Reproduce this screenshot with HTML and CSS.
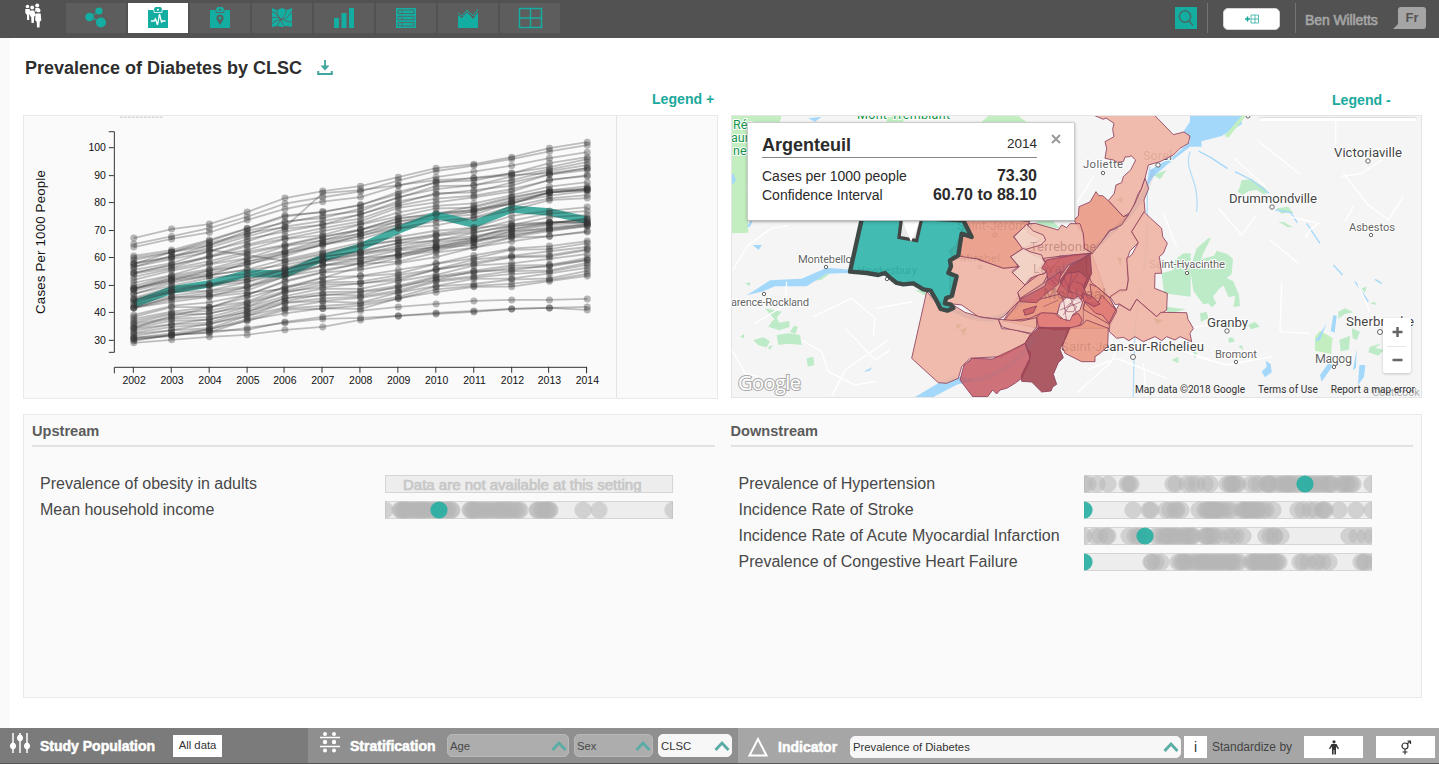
FILE: index.html
```html
<!DOCTYPE html>
<html lang="en">
<head>
<meta charset="utf-8">
<title>Prevalence of Diabetes by CLSC</title>
<link rel="stylesheet" href="styles.css">
</head>
<body>
<header class="topbar">
  <svg class="logo" width="18" height="25" viewBox="0 0 18 25" fill="#fff"><circle cx="2.500" cy="3.500" r="1.800"/><circle cx="7.200" cy="4.500" r="1.900"/><circle cx="12.200" cy="2.500" r="2"/><circle cx="13.500" cy="7.500" r="2"/><path d="M.3 6h4.500l.6 5-1.200 1v5H2v-5L.3 10zM5.300 7.500h4l1.200 5-1.300 1-.4 6.500H6.500L6.200 14 5 13zM10.300 5h4v2l-4 2zM10.500 10.500h5.200l.6 7-1.500 1-.3 6h-2.400l-.5-6-1.400-1z"/></svg>
  <nav class="tabs">
    <a class="tab"><svg viewBox="0 0 22 22"><path d="M5 10L14 4M5 10l11 5" stroke="currentColor"/><circle cx="4.500" cy="10" r="4.300"/><circle cx="14" cy="4" r="3.600"/><circle cx="16" cy="15.500" r="5"/></svg></a>
    <a class="tab active"><svg viewBox="0 0 22 22"><path d="M1 3h6c0-5 8-5 8 0h6v18H1z"/><path d="M7 3v2.500h8V3" fill="none" stroke="#fff" stroke-width=".8"/><circle cx="11" cy="2.700" r="1" fill="#fff"/><path d="M4 14h3l1.500-2 2 6 2-11 2 8 1-1h3" fill="none" stroke="#fff" stroke-width="1.300"/></svg></a>
    <a class="tab"><svg viewBox="0 0 22 22"><path d="M1 3h6c0-5 8-5 8 0h6v18H1z"/><path d="M7 3v2.500h8V3" fill="none" stroke="#5d5d5d" stroke-width=".8"/><circle cx="11" cy="2.700" r="1" fill="#5d5d5d"/><path fill="#5d5d5d" fill-rule="evenodd" d="M11 18C9 14 7.500 13 7.500 11a3.500 3.500 0 0 1 7 0c0 2-1.500 3-3.500 7zM11 9.500a1.500 1.500 0 1 0 0 3 1.500 1.500 0 0 0 0-3z"/></svg></a>
    <a class="tab"><svg viewBox="0 0 22 22"><path d="M1 1l5 2 5-2 5 2 5-2v19l-5-1-5 1-5-1-5 1z"/><path d="M1 5c6 0 8 9 13 15M1 17c5-7 13 0 20-13M6 3v4l4 6M15 3c0 7-7 10-9 16M1 11c7-3 11 4 20 4" fill="none" stroke="#5d5d5d" stroke-width=".8"/></svg></a>
    <a class="tab"><svg viewBox="0 0 22 22"><path d="M1 11h5v10H1zM8.500 6h5v15h-5zM16 1h5v20h-5z"/></svg></a>
    <a class="tab"><svg viewBox="0 0 22 22"><path d="M1 1h20v20H1z"/><path d="M3 3h16v3.500H3zM3 9.300h16v3.500H3zM3 15.500h16V19H3zM7 3v3.500M7 9.300v3.500M7 15.500V19" fill="none" stroke="#5d5d5d" stroke-width=".8"/></svg></a>
    <a class="tab"><svg viewBox="0 0 22 22"><path d="M1 8l4 3 5-6 6 7 5-7v16H1z"/><path d="M1 6l4 3 5-6 6 6 5-7" fill="none" stroke="currentColor"/></svg></a>
    <a class="tab"><svg class="wide" viewBox="0 0 25 22"><path d="M1.500 1.500h22v19h-22zM12.500 1.500v19M1.500 11h22" fill="none" stroke="currentColor" stroke-width="1.500"/></svg></a>
  </nav>
  <div class="tools">
    <span class="search"><svg width="22" height="22" viewBox="0 0 22 22" fill="none" stroke="#456b67" stroke-width="1.500"><circle cx="10" cy="9.500" r="5.700"/><path d="M14 14l4 4.500"/></svg></span>
    <span class="sep"></span>
    <span class="add"><svg width="16" height="10" viewBox="0 0 16 10" fill="none" stroke="#16a597"><path d="M1 5h5M3.500 2.500v5" stroke-width="1.500"/><path d="M7 1h7.500v8H7zM7 5h7.500M11 1v8" stroke-width=".7"/></svg></span>
    <span class="sep second"></span>
    <span class="user">Ben Willetts</span>
    <span class="lang"><svg width="34" height="23" viewBox="0 0 34 23"><path d="M8 0h22a3 3 0 0 1 3 3v16a3 3 0 0 1-3 3H0l5-5V3a3 3 0 0 1 3-3z" fill="#a5a5a5"/></svg><b>Fr</b></span>
  </div>
</header>

<main class="page">
  <div class="titlebar"><h1>Prevalence of Diabetes by CLSC</h1>
    <svg width="16" height="16" viewBox="0 0 16 16" fill="none" stroke="#3fa79d"><path d="M8 0v7" stroke-width="1.800"/><path d="M3.500 5.500h9L8 10.500z" fill="#3fa79d" stroke="none"/><path d="M1.200 11V14h13.600v-3" stroke-width="2"/></svg>
  </div>
  <div class="legends"><span>Legend +</span><span class="minus">Legend -</span></div>

  <div class="charts">
    <section class="trend"><svg id="trend" width="593" height="282" viewBox="24 116 593 282"></svg></section>
    <section class="map">
      <svg class="mapart" width="690" height="281" viewBox="732 116 690 281">
        <g transform="translate(730 110) scale(.33333)">
          <path class="green" d="M0 18h155l-25 80-80 120 5 150-55 2zM470 18h50v25h-50z"/>
          <path class="green2" d="M115 650l10-15 15-12 8 15 30-5 0 18-30 10zM140 675l35-5 35 5 5 30-40-4-30 4zM70 690l30-8 20 12-10 18-25-6zM180 665l12-18 12 3-8 22zM115 710l15-5-12 16zM230 745l20-5 3 25-20 5zM105 595l50 10-20 25zM45 520l15-3v12zM30 680l12-8v13zM165 510l80-5 60-18-30 22-90 13zM555 540l40 3-8 14z"/>
          <path class="water" d="M290 473l-75 33-95 5-70 45 50-12 35-15 95 0 60-38 70-2 85 0 20 8-3-10zM68 405l28 0-10 15zM50 350l25-35-15 35zM400 785l28-14-10 12zM30 30l15 10 5 20-16-18zM235 25l40-5-20 15zM0 200l10-10 8 20-10 15z"/>
          <path class="water" d="M555 861l90-53 45-8 45 10-55 14-70 37z"/>
          <path class="road" d="M5 485l50-80 70-50 50-8M75 640l90-55 5-70M215 690l60 35 20 60 80 40 60-10M250 620l115-55 70 60-5 55M345 655l90 95 45-30M435 595l115-20M305 860l40-80 130-90M0 710l45 80 40 10"/>
        </g>
        <g transform="translate(960 110) scale(.33333)">
          <path class="green" d="M85 18h90l30 22H60z"/>
          <path class="green2" d="M225 330h50l25 25-60-5zM580 195l40-15-20 28zM605 490l35-10 5-30 25-20 22 0v130l-80-10zM618 590l60 8-55 15zM635 750l20-10v20zM700 720l12 10-8 15z"/>
          <path class="water" d="M720 18l-20 2-30 45 25 25-50 45-75 45-15 60 25-40 40-35 70-55 35 0z"/>
          <path class="river" d="M570 170c-20 100 5 170-20 320M548 520c-20 60-25 120-28 340M690 125c-20 60 30 80 20 180M-60 820L0 790"/>
          <path class="road" d="M400 200l-50 80M650 410l-40-100M480 700l-30 60-100 90M380 780l90-35 150 60M550 760l10 100M600 700l150 50"/>
        </g>
        <g transform="translate(1190 110) scale(.33333)">
          <path class="water" d="M0 18h155v25l-60 35-95 25z"/>
          <path class="green" d="M155 18h12l-52 65-12-5zM375 680l15-18 38 22-5 48-48-10z"/>
          <path class="green2" d="M150 230l5-20 30-2 40 27 10 15-15 2-20-12-22 3-20 12-15-10zM260 295l35-5 15 20-20-3-15 5zM265 335l18 2 25 15-15-1zM0 475l20-60 12-10 20-18 12-5-25 50-5 15 38-10 8-15 32 10 17 15-4 45-15 12 20 10 17 40 3 33-20 5 6-35-20 5-15-35-12 8-20 25 10 20-14 12-10-12-15 3-30-40zM445 605l20-10 25 12-25 5-20 15zM448 690l20-8 12-5-3 42-25 5zM485 655l25 10-10 25-12-5zM515 535l15-5-5 18zM540 710l35-10-20 14 28 5-18 18-30-10zM540 580l15-5 3 10zM175 645l20-10 15 15-28 8zM30 610l20-5 5 20-22 10zM110 645l18-5-5 18zM115 685l12-3 8 12-18 5zM145 710l10-5 6 15z"/>
          <path class="water" d="M395 815l-5-20 25-35 15 5zM215 785l15-15-3-18 15 10 3 25-20 15zM430 615l10 3-6 50-12-5zM500 715l-2 58-9 8zM508 765h18l-4 35-18 25zM375 695l35-55-20 50z"/>
          <path d="M25 123l38 20 50 33M135 185l50 25 52 40M257 300l45 8 20 30M350 340l40 60M430 465l28 30M495 515l40 60M555 508l20 12" fill="none" stroke="#a4d8fb" stroke-width="4"/>
          <path class="road" d="M205 93l125 100M437 18v85M460 190l75 95 60 45 45-70M132 145l95 85M85 295l70 80 45-60M240 390l85 70M275 515l-5 150 90 5M505 525l35 80M0 655l100-20M20 740l90 25 135-25M575 150l-60 40-60 10M465 335l25-45M345 385l15-25 25-20-85-20"/>
        </g>
        <g class="towns">
          <text class="park" x="733" y="129">Rés</text><text class="park" x="731" y="142">aun</text><text class="park" x="733" y="155">ne</text>
          <text class="park" x="857" y="119" textLength="93">Mont-Tremblant</text>
          <text x="798" y="263" textLength="54">Montebello</text><text x="857" y="274" textLength="60">Hawkesbury</text><text x="731" y="306" textLength="78">arence-Rockland</text>
          <text x="1083" y="168" textLength="40">Joliette</text><text class="mid" x="1143" y="160" textLength="29">Sorel</text>
          <text class="mid" x="957" y="230" textLength="76">Saint-Jérôme</text><text class="mid" x="1030" y="251" textLength="66">Terrebonne</text><text x="960" y="262" textLength="40">Mirabel</text><text class="mid" x="1033" y="273" textLength="32">Laval</text><text class="big" x="1043" y="299" textLength="63">Montreal</text>
          <text x="1149" y="268" textLength="76">Saint-Hyacinthe</text><text class="city" x="1061" y="351" textLength="143">Saint-Jean-sur-Richelieu</text>
          <text class="city" x="1334" y="157" textLength="68">Victoriaville</text><text class="city" x="1229" y="203" textLength="88">Drummondville</text><text x="1349" y="231" textLength="46">Asbestos</text><text class="city" x="1207" y="327" textLength="41">Granby</text><text x="1215" y="358" textLength="42">Bromont</text><text class="city" x="1346" y="326" textLength="68">Sherbrooke</text><text class="mid" x="1315" y="363" textLength="37">Magog</text><text x="1372" y="396" opacity=".5" textLength="48">Coaticook</text>
        </g>
        <g fill="#fff" stroke="#666"><circle cx="826" cy="267" r="1.700"/><circle cx="764" cy="294" r="1.700"/><circle cx="887" cy="279" r="1.700"/><circle cx="1103" cy="173" r="1.700"/><circle cx="1187" cy="273" r="1.700"/><circle cx="1133" cy="357" r="2.500"/><circle cx="1368" cy="161" r="2.200"/><circle cx="1272" cy="207" r="2.200"/><circle cx="1371" cy="235" r="1.700"/><circle cx="1227" cy="331" r="2.200"/><circle cx="1236" cy="362" r="1.700"/><circle cx="1380" cy="332" r="2.500"/><circle cx="1334" cy="367" r="1.700"/><circle cx="1248" cy="116" r="2"/><circle cx="995" cy="235" r="2"/><circle cx="1049" cy="279" r="2"/><circle cx="980" cy="267" r="1.700"/><circle cx="1158" cy="165" r="2.200"/></g>
        <g class="regions" transform="translate(960 110) scale(.33333)">
          <path class="r3" d="M130 632L180 550 255 450 395 430 440 555 470 600 448 655 235 655z"/>
          <path class="r2" d="M400 15L430 28 438 24 462 40 458 58 462 80 435 95 440 115 435 145 460 150 472 157 490 155 495 141 510 140 512 136 527 150 512 180 490 200 485 218 468 225 463 250 445 272 490 320 510 308 522 285 535 250 545 235 555 205 565 165 600 155 640 135 660 115 685 100 690 78 672 66 640 74 583 15z"/>
          <path class="r2" d="M555 205L566 235 552 270 555 305 535 335 515 365 535 398 510 423 502 445 505 510 500 540 470 550 450 563 395 518 380 483 380 430 425 395 450 362 470 355 505 315 525 280 545 235z"/>
          <path class="r3" d="M408 245l8 12 12 0 17 15 45 48 15-5-20 30-38 17-22 33-28 35-25-15-4-45-14-20-12-20 13-12 2-28 33-14z"/>
          <path class="r2" d="M552 305l20 20 33 30 3 25 14 20-12 30-12 10 7 50-20 0-1 45 38 15-2 50-30 20-60-52-20 34-32-20-12 2-16-24 30-20 20 0 5-30-5-65 15-10 20-37-20-33z"/>
          <path class="r2" d="M530 568l60 52 12-13 78 1 4 20 16 27-10 15 5 25-35-15-15 10-25-10-15 12-20-12-35 15-25-15-18 12-17-10-20 3-22-20 0-30 30-52 32 19z"/>
          <path class="r3" d="M18 330h147l45 5-10 10-40 35 30 35-38 25 23 30-25 5-20 0-55-20-25-10-70 2-12-25 20-15z"/>
          <path class="r2" d="M205 342L225 340 295 360 305 345 320 353 330 341 360 341 370 371 374 416 397 430 300 438 255 450 210 430 190 415 243 388 203 368z"/>
          <path class="r1" d="M162 380l38-37 20 20 30 12 7 15-14 15-53 15z"/>
          <path class="r2" d="M195 525L235 495 255 490 260 460 250 445 310 438 270 480 250 520 180 565 173 547z"/>
          <path class="r1" d="M152 440l38-25 20 10 35 10 5 15 15 20-10 20-20 5-25 10-15 20-15-15-25-20 23-20z"/>
          <path class="r2" d="M-65 582l35-25 0-110 20-10 60 10 80 28 45-5-20 15 40 40-22 22 7 23-50 50-15 8-60-8-50-35-45-5z"/>
          <path class="r2" d="M-100 545l35 37 45 3 35 22 50 15 50 6 10 28 35 2 53 15-18 27-70 40-65 3-30 2-25 25-10 35-35 15-25-2-80-73z"/>
          <path class="r3" d="M180 570l50 0 70-18 10 20-20 40-48-2-32 15-80 10 35-43z"/>
          <path class="r2" d="M115 628l70 5 45-10 0 27-15 20-65-12-25-8z"/>
          <path class="r4" d="M260 450l80-15 55-5-35 20-35 15-25 35-20 28-15-8-5-35-15-10z"/>
          <path class="r4" d="M180 568l75-40 5-15 45-30-10 40-40 30-25 25-50-3zM190 600l40-12-10 20-25 8z"/>
          <path class="r5" d="M390 430l5 60-15 35-10 20-65-18-5-15 32-47 30-15z"/>
          <path class="r4" d="M320 490l40-5 22 20-12 25 8 20-20 25-50-15-18-15z"/>
          <path class="r4 soft" d="M230 620l15-12 40 2 15 15 25-5 30-10 12 20-12 25-70 5-50-10z"/>
          <path class="r3" d="M390 522l20 8 40 35 20 40-22 38-78-45 5-23 20-15z"/>
          <path class="r4 soft" d="M425 555l42 45-20 40-20-25-20-5-35-35 40 8z"/>
          <path class="r4" d="M368 550l30 10 22 22-18 8-32-18z"/>
          <path class="r0" d="M300 580l20-18 22 6 12-10 14 18-8 24-20 12-10 20-20-4-18-16z"/>
          <path class="lines" d="M310 565l10 70M330 560l20 50M300 600l65-25M320 590l10-10 20 10-10 15-20 0-8-12M340 570l-30 45M280 500l40 40 50 20M310 500l25 50M335 490l-10 60M355 490l-35 50M345 515l25 10M250 520l20-15 20 22M250 590l45-20M370 580l0 60-45 20"/>
          <path class="r3" d="M325 655l40-10 15-15 65 25-2 55-23 20-15 10 0 15-40 0-50-25-8-20z"/>
          <path class="r4" d="M12 765l25-20 60 2 60-28 38-19 17 30-5 30-22 45-20 15-25 15-20 5-10 12-12-12-15 20-45 0-38-50z"/>
          <path class="r5" d="M195 700l15-25 25-22 95 0-10 25-20 40 10 25-15 15-15 35 5 15 5 15-12 8-5 12-28 3-20-20-10-10-30-2 0-20 25-50z"/>
          <path class="river dim" d="M-90 560c100 60 150 80 210 60s150-140 270-190c70-80 150-110 190-250M0 805c60 20 170-30 220-120"/>
          <path class="green dim2" d="M0 660l20-8-8 25zM470 440l15 5-3 22zM580 625l30 5-18 12zM-10 640l15 5-15 15zM470 270l15-10 5 20z"/>
        </g>
        <g class="veiled"><text class="big" x="1043" y="299" textLength="63">Montreal</text><text x="1030" y="251" textLength="66">Terrebonne</text><text x="1033" y="273" textLength="32">Laval</text></g>
        <g transform="translate(730 110) scale(.33333)">
          <path d="M398 315l-38 170 50 4 35 6 20-6 20 18 15 12 20 4 30-3 30 18 22 4 15 25 15 30 20 5 18-8-7-10-18-4 3-15 18-8 14-58-25-10 8-20-3-18 25-15 10-65 30 10-25-50z" fill="#29b3a9" fill-opacity=".88" stroke="#3f4947" stroke-width="13" stroke-linejoin="round"/>
          <path d="M515 320l-8 62 53 10 14-62z" fill="#e9ebea" stroke="#444" stroke-width="10"/><path d="M513 320l30 76 31-76z" fill="#fff"/>
        </g>
        <text class="google" x="738" y="390" textLength="63">Google</text>
      </svg>
      <div class="popup">
        <div class="pophead"><b>Argenteuil</b><span>2014</span></div>
        <div class="poprow"><span>Cases per 1000 people</span><b>73.30</b></div>
        <div class="poprow"><span>Confidence Interval</span><b>60.70 to 88.10</b></div>
        <svg class="close" width="10" height="10" viewBox="0 0 10 10"><path d="M1 1l8 8M9 1L1 9" stroke="#999" stroke-width="2"/></svg>
      </div>
      <div class="scrap"></div>
      <div class="zoomer"><svg width="28" height="56" viewBox="0 0 28 56"><path d="M9.500 14h10M14.500 9v10M9.500 42h10" stroke="#666" stroke-width="2.500"/><path d="M4 28.500h19" stroke="#e6e6e6"/></svg></div>
      <div class="credits"><span>Map data ©2018 Google</span><span>Terms of Use</span><span>Report a map error</span></div>
    </section>
  </div>

  <section class="streams">
    <div class="stream"><h2>Upstream</h2>
      <div class="row"><span>Prevalence of obesity in adults</span><div class="strip none">Data are not available at this setting</div></div>
      <div class="row"><span>Mean household income</span><svg class="strip" data-row="income"></svg></div>
    </div>
    <div class="stream"><h2>Downstream</h2>
      <div class="row"><span>Prevalence of Hypertension</span><svg class="strip" data-row="hypertension"></svg></div>
      <div class="row"><span>Incidence Rate of Stroke</span><svg class="strip" data-row="stroke"></svg></div>
      <div class="row"><span>Incidence Rate of Acute Myocardial Infarction</span><svg class="strip" data-row="infarction"></svg></div>
      <div class="row"><span>Prevalence of Congestive Heart Failure</span><svg class="strip" data-row="failure"></svg></div>
    </div>
  </section>
</main>

<footer class="bottombar">
  <div class="seg population">
    <svg width="20" height="22" viewBox="0 0 20 22" fill="#fff" stroke="#fff"><path d="M3 1v20M10 1v20M17 1v20" stroke-width="1.500"/><ellipse cx="3" cy="14" rx="2.500" ry="3"/><ellipse cx="10" cy="6" rx="2.500" ry="3"/><ellipse cx="17" cy="14" rx="2.500" ry="3"/></svg>
    <b class="seglabel">Study Population</b><span class="alldata">All data</span>
  </div>
  <div class="seg strat">
    <svg width="20" height="22" viewBox="0 0 20 22" fill="#fff"><path d="M0 5.500h20M0 14.500h20" stroke="#fff" stroke-width="1.600"/><circle cx="5" cy="2" r="2"/><circle cx="14" cy="2" r="2"/><circle cx="5" cy="10" r="2.200"/><circle cx="14" cy="10" r="2.200"/><circle cx="5" cy="18.500" r="2"/><circle cx="14" cy="18.500" r="2"/></svg>
    <b class="seglabel">Stratification</b>
    <span class="select age">Age<svg class="chev" viewBox="0 0 16 10"><path d="M1.500 9L8 2l6.500 7"/></svg></span>
    <span class="select sex">Sex<svg class="chev" viewBox="0 0 16 10"><path d="M1.500 9L8 2l6.500 7"/></svg></span>
    <span class="select on clsc">CLSC<svg class="chev" viewBox="0 0 16 10"><path d="M1.500 9L8 2l6.500 7"/></svg></span>
  </div>
  <div class="seg indicator">
    <svg width="20" height="20" viewBox="0 0 20 20" fill="none" stroke="#fff" stroke-width="2"><path d="M10 2l8.500 16.500h-17z"/></svg>
    <b class="seglabel">Indicator</b>
    <span class="select on main">Prevalence of Diabetes<svg class="chev" viewBox="0 0 16 10"><path d="M1.500 9L8 2l6.500 7"/></svg></span>
    <span class="info">i</span><span class="std">Standardize by</span>
    <span class="btn"><svg width="12" height="15" viewBox="0 0 12 15" fill="#333"><circle cx="6" cy="1.800" r="1.600"/><path d="M3.500 4h5L11 8.500l-1 .7-2-2.700v8H6.400V10h-.8v4.500H4v-8L2 9.200l-1-.7z"/></svg></span>
    <span class="btn"><svg width="12" height="15" viewBox="0 0 12 15" fill="none" stroke="#333" stroke-width="1.200"><circle cx="5" cy="6" r="3"/><path d="M5 9v5.500M2.500 12h5M7 4l3.500-3M7.500 1H10.500V4"/></svg></span>
  </div>
</footer>
<script src="charts.js"></script>
</body>
</html>
```
FILE: styles.css
```css
* { box-sizing: border-box; }
body { margin: 0; width: 1439px; height: 764px; overflow: hidden; display: flex; flex-direction: column; font-family: "Liberation Sans", Arial, sans-serif; color: #333; background: #fff; }
svg { display: block; flex: none; }
.topbar { height: 38px; background: #525252; display: flex; align-items: flex-start; padding: 3px 0 0 25px; flex: none; }
.logo { margin-right: 23px; }
.tabs { display: flex; gap: 2px; }
.tab { width: 60px; height: 30px; background: #5d5d5d; color: #14ada1; display: flex; align-items: center; justify-content: center; }
.tab svg { width: 22px; height: 22px; fill: currentColor; }
.tab svg.wide { width: 25px; height: 22px; }
.tab.active { background: #fff; }
.tools { margin-left: auto; display: flex; align-items: flex-start; height: 33px; padding-right: 12px; }
.search { background: #14ada1; margin: 4px 10px 0 0; }
.sep { width: 1px; height: 30px; background: #737373; margin-right: 15px; }
.sep.second { margin: 0 9px 0 15px; }
.add { width: 57px; height: 22px; margin-top: 5px; background: #fff; border: 1px solid #d5d5d5; border-radius: 5px; display: flex; align-items: center; justify-content: center; }
.user { width: 88px; font-size: 14px; line-height: 34px; color: #a5a5a5; -webkit-text-stroke: .6px #a5a5a5; letter-spacing: -.1px; white-space: nowrap; }
.lang { display: grid; margin-top: 4px; }
.lang svg, .lang b { grid-area: 1 / 1; }
.lang b { font-size: 13px; line-height: 21px; text-align: center; padding-left: 4px; color: #555; }

.page { flex: 1; min-height: 0; border-left: 10px solid #fafafa; padding: 0 17px 0 13px; }
.titlebar { height: 48px; padding: 12px 0 0 2px; display: flex; align-items: flex-start; gap: 15px; }
.titlebar svg { margin-top: 10px; }
h1 { margin: 0; font-size: 18px; line-height: 36px; color: #2e2e2e; }
.legends { height: 29px; display: flex; color: #19a99c; font-size: 14.1px; font-weight: bold; line-height: 17px; padding: 5px 0 0 629px; }
.legends span { width: 680px; }
.legends .minus { width: 60px; padding-top: 1px; white-space: nowrap; }
.charts { display: flex; gap: 13px; height: 284px; }
.trend { width: 695px; height: 284px; border: 1px solid #e9e9e9; background: #fafafa; }
.trend svg { border-right: 1px solid #e9e3df; }
.map { width: 691px; height: 283px; border: 1px solid #e5e5e5; position: relative; overflow: hidden; background: #f5f5f5; }
.green { fill: #c3efc0; }
.green2 { fill: #beebc7; }
.water { fill: #a4d8fb; }
.river { fill: none; stroke: #b6def8; stroke-width: 4; }
.road { fill: none; stroke: #fff; stroke-width: 4; }
.towns { font-family: Roboto, sans-serif; font-size: 11.3px; fill: #646464; stroke: #fff; stroke-width: 2px; paint-order: stroke; }
.towns .mid { font-size: 12.5px; }
.towns .city { font-size: 13.2px; fill: #454545; }
.big { font-size: 15.5px; font-weight: 500; }
.towns .park { font-size: 12.5px; fill: #139449; }
.veiled { font-family: Roboto, sans-serif; font-size: 12.5px; fill: #8c4a50; fill-opacity: .3; }
.regions path { stroke: #8c3f5c; stroke-width: 3; fill-opacity: .88; stroke-opacity: .85; stroke-linejoin: bevel; }
.regions .r0 { fill: #f8e7e4; }
.regions .r1 { fill: #f3cdbf; }
.regions .r2 { fill: #efb3a2; }
.regions .r3 { fill: #e99782; }
.regions .r4 { fill: #ca5f66; }
.regions .soft { fill: #e07a76; }
.regions .r5 { fill: #a24450; }
.regions .lines { fill: none; stroke-width: 2; }
.regions .river.dim { stroke: #8c79a0; stroke-opacity: .12; stroke-width: 14; }
.regions .dim2 { stroke: none; fill: #c5a176; fill-opacity: .35; }
.google { font: 500 20px "Open Sans", sans-serif; fill: #fff; stroke: #aaa; stroke-width: 2px; paint-order: stroke; }
.popup { position: absolute; left: 15px; top: 6px; width: 328px; height: 99px; background: #fff; border: 1px solid #ccc; border-radius: 2px; box-shadow: 0 1px 3px rgba(0,0,0,.3); padding: 10px 37px 0 14px; color: #2b2b2b; border-bottom-color: #bbb; }
.pophead { display: flex; justify-content: space-between; align-items: center; height: 25px; border-bottom: 1px solid #888; margin-bottom: 9px; font-size: 14px; }
.pophead b { font-size: 18px; line-height: 26px; }
.pophead span { padding-bottom: 3px; font-size: 13.5px; }
.poprow { display: flex; justify-content: space-between; font-size: 14px; line-height: 18.5px; height: 18.5px; white-space: nowrap; }
.poprow b { font-size: 16px; }
.close { position: absolute; right: 13px; top: 11px; }
.scrap { position: absolute; left: 527px; top: 2px; width: 158px; height: 3px; background: #fff; border-radius: 3px 3px 0 0; box-shadow: 0 -1px 1px #ddd; }
.zoomer { position: absolute; left: 651px; top: 202px; width: 28px; height: 55px; background: #fff; border-radius: 2px; box-shadow: 0 1px 3px rgba(0,0,0,.2); }
.credits { position: absolute; right: 6px; bottom: -1px; display: flex; gap: 13px; font: 10.1px/16px Roboto, sans-serif; color: #333; white-space: nowrap; }

.streams { margin-top: 15px; width: 1399px; height: 284px; border: 1px solid #e9e9e9; background: #fafafa; display: flex; gap: 16px; padding: 8px; }
.stream { width: 683px; }
h2 { margin: 0 0 24px; height: 24px; border-bottom: 2px solid #e2e2e2; font-size: 14.6px; line-height: 16px; color: #5c5c5c; }
.row { height: 26px; display: flex; align-items: center; padding-left: 8px; font-size: 16px; color: #484848; }
.row > span { width: 345px; white-space: nowrap; }
.strip { width: 288px; height: 18px; overflow: hidden; }
.none { background: #ededed; border: 1px solid #d5d5d5; font-size: 15px; line-height: 18px; padding-left: 17px; color: #c7c7c7; -webkit-text-stroke: .7px #c7c7c7; white-space: nowrap; }

.bottombar { height: 36px; display: flex; flex: none; border-bottom: 1px solid #555; }
.seg { display: flex; align-items: center; font-size: 11.3px; }
.population { width: 308px; background: #7b7b7b; padding-left: 10px; }
.population > svg, .strat > svg { margin-bottom: 5px; }
.strat { width: 430px; background: #8f8f8f; padding-left: 12px; }
.indicator { width: 701px; background: #a6a6a6; padding: 3px 0 0 10px; }
.seglabel { color: #fff; font-size: 14px; -webkit-text-stroke: .5px #fff; margin-left: 10px; white-space: nowrap; flex: none; }
.population .seglabel { width: 133px; }
.strat .seglabel { width: 97px; }
.indicator .seglabel { width: 72px; }
.alldata { width: 49px; height: 22px; background: #fff; line-height: 21px; text-align: center; }
.select { height: 23px; border-radius: 5px; border: 1px solid #b8b8b8; background: #adadad; display: flex; align-items: center; justify-content: space-between; padding: 0 1px 0 2px; color: #494949; margin-right: 5px; flex: none; }
.select.on { background: #f7f7f7; border-color: #f7f7f7; color: #333; }
.age { width: 122px; }
.sex { width: 79px; }
.clsc { width: 74px; }
.main { width: 331px; height: 22px; margin-right: 3px; }
.chev { width: 16px; height: 10px; fill: none; stroke: #5aaca5; stroke-width: 2.8; }
.info { width: 23px; height: 22px; background: #fff; text-align: center; font-size: 14px; line-height: 22px; flex: none; }
.std { width: 92px; margin-left: 5px; font-size: 12px; color: #444; white-space: nowrap; flex: none; }
.btn { width: 59px; height: 22px; background: #fff; display: flex; align-items: center; justify-content: center; margin-right: 13px; flex: none; }
.tick { font-size: 10.5px; fill: #111; }
.axis { stroke: #333; fill: none; }
```
FILE: charts.js
```js
const NS = 'http://www.w3.org/2000/svg';
function add(parent, tag, attrs, text) {
  const el = document.createElementNS(NS, tag);
  for (const k in attrs) el.setAttribute(k, attrs[k]);
  if (text) el.textContent = text;
  parent.appendChild(el);
  return el;
}

const trend = document.getElementById('trend');
const xOf = i => 134 + i * 37.85;
const progress = [0, .09, .16, .27, .40, .48, .54, .64, .73, .79, .87, .94, 1];
const starts = [238,244,247,256,258,260,263,264,267,270,273,273,274,277,280,283,286,288,289,289,291,294,298,299,301,303,305,307,308,308,315,317,319,321,323,324,326,328,329,331,333,334,336,338,339,340];
const ends = [142,145,152,159,157,165,162,170,175,168,176,182,186,190,188,189,190,191,195,198,207,211,215,219,220,222,224,224,226,231,232,241,243,247,249,250,254,258,260,260,263,265,268,271,274,276];
const focusValues = [304,290,284,273.5,274,258,247,230,215,224,209,212,220];

function draw(ys) {
  add(trend, 'polyline', { points: ys.map((y, i) => xOf(i) + ',' + y).join(' '), fill: 'none', stroke: '#333', 'stroke-width': 1.8, 'stroke-opacity': .3 });
  ys.forEach((y, i) => add(trend, 'circle', { cx: xOf(i), cy: y, r: 3.5, fill: '#333', 'fill-opacity': .35 }));
}
function drawFocus() {
  add(trend, 'polyline', { points: focusValues.map((y, i) => xOf(i) + ',' + y).join(' '), fill: 'none', stroke: '#239e91', 'stroke-opacity': .85, 'stroke-width': 7.5 });
}

draw([238,229,224,212,198,191,186,177,168,164,157,148,142]);
starts.slice(1).forEach((start, k) => {
  const n = k + 1;
  if (n === 18) drawFocus();
  draw(progress.map((p, i) => {
    const wobble = i === 0 || i === 12 ? 0 : Math.sin(n * 12.7 + i * 1.35) * 2.4 + Math.sin(n * 4.1 + i * 3) * 1.2;
    return start + (ends[n] - start) * p + (n < 3 ? wobble * .4 : wobble);
  }));
});
draw([308,302,297,293,289,278,267,258,248,245,237,231,226]);
draw([289,280,275,270,265,257,251,243,236,232,226,222,222]);
draw([267,256,250,255,261,253,245,240,234,228,224,222,223]);
draw([264,252,243,233,227,193,190,185,180,178,175,173,168]);
draw([328,316,308,295,281,272,263,254,246,240,236,229,225]);
draw([300,291,285,279,270,260,254,246,240,236,229,224,218]);
draw([294,283,276,262,254,244,236,225,214,206,197,190,189]);
draw([341,335,331,330,322,317,311,307,304,301,300,300,299]);
draw([338,335,333,328,323,319,318,316,313,311,309,308,307]);
draw([343,340,337,335,330,327,320,316,314,312,309,308,310]);

add(trend, 'path', { class: 'axis', d: 'M109 131.500h5.500v221h-5.500M114.500 373.500v-6H587.500v6' });
for (let v = 30; v <= 100; v += 10) {
  const y = Math.round(340 - (v - 30) * 2.757) + .5;
  add(trend, 'path', { class: 'axis', d: `M109 ${y}h5` });
  add(trend, 'text', { class: 'tick', x: 106, y: y + 3.5, 'text-anchor': 'end' }, String(v));
}
for (let i = 0; i < 13; i++) {
  const x = Math.round(xOf(i)) - .5;
  add(trend, 'path', { class: 'axis', d: `M${x} 367v6` });
  add(trend, 'text', { class: 'tick', x: x + .8, y: 384, 'text-anchor': 'middle' }, String(2002 + i));
}
add(trend, 'text', { transform: 'translate(45 242) rotate(-90)', 'text-anchor': 'middle', 'font-size': 13.3, fill: '#111', textLength: 144 }, 'Cases Per 1000 People');
add(trend, 'path', { d: 'M120 117h43', stroke: '#ccc', 'stroke-dasharray': '3 1' });

const rows = {
  income: { focus: 54, dots: [0,15,16,18,19,21,23,26,28,31,33,36,38,40,42,45,48,51,54,56,58,61,63,66,67,85,86,88,90,92,95,98,100,103,106,109,112,114,116,119,121,125,127,130,133,135,152,153,156,158,161,162,164,165,198,214,288] },
  hypertension: { focus: 221, dots: [0,4,13,24,43,45,47,89,92,103,108,113,121,126,143,146,148,149,152,154,167,172,176,183,184,185,188,194,198,200,203,204,206,209,212,216,221,226,229,231,235,238,241,244,246,248,257,259,262,264,267,269,288] },
  stroke: { focus: 0, dots: [49,65,67,82,86,91,93,97,115,121,123,125,127,129,131,132,134,137,140,144,148,157,160,161,163,165,166,169,172,173,175,179,182,189,214,219,226,231,238,240,241,255,272,288] },
  infarction: { focus: 61, dots: [0,11,16,22,24,45,51,54,56,72,76,80,82,84,86,90,92,94,99,101,104,106,108,109,121,122,124,126,128,131,136,144,148,152,159,182,186,190,191,197,265,273,281,288] },
  failure: { focus: 0, dots: [67,68,72,77,94,97,99,101,103,107,111,114,117,119,121,124,126,129,132,134,136,139,142,145,147,149,152,155,167,169,171,172,175,177,180,182,185,187,189,191,193,195,216,219,224,231,234,239,245,277,280,281,288] }
};
document.querySelectorAll('svg.strip').forEach(svg => {
  const row = rows[svg.dataset.row];
  add(svg, 'rect', { x: .5, y: .5, width: 287, height: 17, fill: '#ededed', stroke: '#d5d5d5' });
  row.dots.forEach(x => add(svg, 'circle', { cx: x, cy: 9, r: 8.6, fill: '#b5b5b5', 'fill-opacity': .5 }));
  add(svg, 'circle', { cx: row.focus, cy: 9, r: 8.6, fill: '#25aea2', 'fill-opacity': .9 });
});
```
